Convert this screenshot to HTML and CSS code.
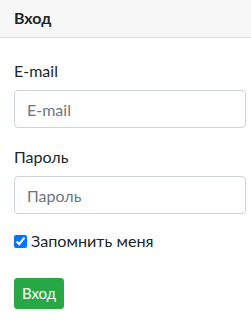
FILE: index.html
```html
<!DOCTYPE html>
<html lang="ru">
<head>
<meta charset="utf-8">
<link rel="stylesheet" href="styles.css">
</head>
<body>
<div class="card">
  <div class="card-header">Вход</div>
  <form class="card-body">
    <div class="group">
      <label class="label" for="email">E-mail</label>
      <input class="input" id="email" type="email" placeholder="E-mail">
    </div>
    <div class="group">
      <label class="label" for="pass">Пароль</label>
      <input class="input" id="pass" type="password" placeholder="Пароль">
    </div>
    <label class="check"><input type="checkbox" checked> Запомнить меня</label>
    <button class="btn" type="button">Вход</button>
  </form>
</div>
</body>
</html>
```
FILE: styles.css
```css
* { box-sizing: border-box; }
body {
  margin: 0;
  font-family: Lato, "Noto Sans", sans-serif;
  font-size: 16px;
  line-height: 1.5;
  color: #212529;
  background: #fff;
}
.card-header {
  height: 38px;
  padding: 7px 14px;
  background: #f7f7f7;
  border-bottom: 1px solid #dcdcdc;
  font-weight: 700;
  font-size: 16px;
  line-height: 22px;
}
.card-body {
  display: flex;
  flex-direction: column;
  align-items: flex-start;
  padding: 21px 5px 0 14px;
}
.group {
  display: flex;
  flex-direction: column;
  width: 100%;
  margin-bottom: 17px;
}
.label {
  line-height: 24px;
  margin-bottom: 7px;
}
.input {
  width: 100%;
  height: 38px;
  padding: 6px 12px;
  font: inherit;
  color: #495057;
  border: 1px solid #ced4da;
  border-radius: 4px;
  background: #fff;
}
.input::placeholder { color: #6c757d; }
.check {
  display: flex;
  align-items: center;
  gap: 4px;
  line-height: 24px;
  margin-top: -2px;
  font-size: 16.2px;
}
.check input {
  margin: 0;
  width: 13px;
  height: 13px;
  accent-color: #0075ff;
}
.btn {
  margin-top: 25px;
  height: 31px;
  padding: 4px 7px;
  font-family: inherit;
  font-size: 15px;
  line-height: 21px;
  color: #fff;
  background: #28a745;
  border: 1px solid #28a745;
  border-radius: 3px;
}
```
